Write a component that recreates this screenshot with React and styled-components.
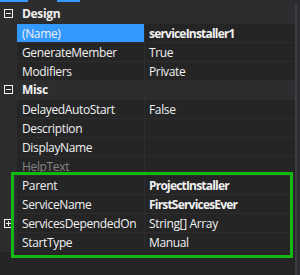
import React from 'react';
import styled, { createGlobalStyle } from 'styled-components';

const Global = createGlobalStyle`
  html, body {
    margin: 0;
    padding: 0;
    background: #252526;
  }
  body {
    font-family: "Segoe UI", "Open Sans", "Noto Sans", sans-serif;
    font-size: 12px;
    letter-spacing: -0.35px;
    color: #f1f1f1;
  }
`;

const Page = styled.div`
  position: relative;
  width: 300px;
  height: 275px;
  overflow: hidden;
  background: #252526;
  display: flex;
  flex-direction: column;
`;

const TabStrip = styled.div`
  height: 4px;
  background: #2d2d30;
  display: flex;
  align-items: flex-start;
  gap: 29px;
`;

const TabMark = styled.div`
  width: ${p => p.w}px;
  height: 2px;
  background: #3399ff;
`;

const Body = styled.div`
  flex: 1;
  display: flex;
`;

const Grid = styled.div`
  flex: 1;
  display: flex;
  flex-direction: column;
`;

const ScrollBar = styled.div`
  width: 5px;
  display: flex;
  background: #2d2d30;
  &::before {
    content: '';
    width: 2px;
    background: #3e3e42;
  }
`;

const CategoryRow = styled.div`
  height: 19px;
  display: flex;
  align-items: center;
  background: #2d2d30;
  font-weight: bold;
`;

const Gutter = styled.div`
  width: 17px;
  height: 100%;
  flex-shrink: 0;
  display: flex;
  align-items: center;
  justify-content: center;
  background: #2d2d30;
`;

const Label = styled.span`
  padding-left: 5px;
`;

const PropRow = styled.div`
  height: 18px;
  display: flex;
  border-top: 1px solid #2d2d30;
  ${p => p.last && 'border-bottom: 1px solid #2d2d30;'}
`;

const NameCell = styled.div`
  width: 128px;
  flex-shrink: 0;
  display: flex;
  align-items: center;
  padding-left: 5px;
  box-sizing: border-box;
  white-space: nowrap;
  overflow: hidden;
  background: ${p => (p.selected ? '#3399ff' : '#252526')};
  color: ${p => (p.dim ? '#848484' : '#f1f1f1')};
  border-right: 1px solid #2d2d30;
`;

const ValueCell = styled.div`
  flex: 1;
  display: flex;
  align-items: center;
  padding-left: 4px;
  white-space: nowrap;
  font-weight: ${p => (p.bold ? 'bold' : 'normal')};
  letter-spacing: ${p => (p.bold ? '-0.8px' : '-0.35px')};
`;

const Highlight = styled.div`
  position: absolute;
  left: 11px;
  top: 172px;
  width: 282px;
  height: 86px;
  box-sizing: border-box;
  border: 3px solid #12b912;
  pointer-events: none;
`;

const Toggle = ({ open }) => (
  <svg width="9" height="9" viewBox="0 0 9 9">
    <rect x="0.5" y="0.5" width="8" height="8" fill="none" stroke="#f1f1f1" />
    <line x1="2" y1="4.5" x2="7" y2="4.5" stroke="#f1f1f1" />
    {!open && <line x1="4.5" y1="2" x2="4.5" y2="7" stroke="#f1f1f1" />}
  </svg>
);

const categories = [
  {
    name: 'Design',
    props: [
      { name: '(Name)', value: 'serviceInstaller1', bold: true, selected: true },
      { name: 'GenerateMember', value: 'True' },
      { name: 'Modifiers', value: 'Private' },
    ],
  },
  {
    name: 'Misc',
    props: [
      { name: 'DelayedAutoStart', value: 'False' },
      { name: 'Description', value: '' },
      { name: 'DisplayName', value: '' },
      { name: 'HelpText', value: '', dim: true },
      { name: 'Parent', value: 'ProjectInstaller', bold: true },
      { name: 'ServiceName', value: 'FirstServicesEver', bold: true },
      { name: 'ServicesDependedOn', value: 'String[] Array', expandable: true },
      { name: 'StartType', value: 'Manual' },
    ],
  },
];

const App = () => {
  return (
    <>
      <Global />
      <Page>
        <TabStrip>
          <TabMark w={28} />
          <TabMark w={23} />
        </TabStrip>
        <Body>
          <Grid>
            {categories.map((cat, ci) => (
              <React.Fragment key={cat.name}>
                <CategoryRow>
                  <Gutter>
                    <Toggle open />
                  </Gutter>
                  <Label>{cat.name}</Label>
                </CategoryRow>
                {cat.props.map((p, i) => (
                  <PropRow key={p.name} last={ci === categories.length - 1 && i === cat.props.length - 1}>
                    <Gutter>{p.expandable && <Toggle />}</Gutter>
                    <NameCell selected={p.selected} dim={p.dim}>{p.name}</NameCell>
                    <ValueCell bold={p.bold}>{p.value}</ValueCell>
                  </PropRow>
                ))}
              </React.Fragment>
            ))}
          </Grid>
          <ScrollBar />
        </Body>
        <Highlight />
      </Page>
    </>
  );
};

export default App;
